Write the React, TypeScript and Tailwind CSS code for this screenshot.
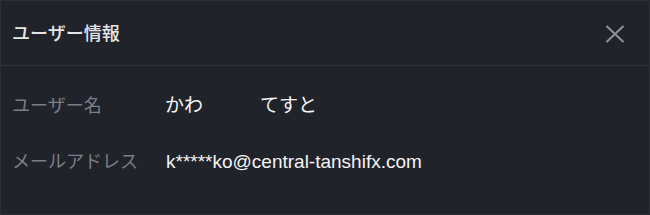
export default function App() {
  return (
    <div
      className="w-[650px] h-[215px] bg-[#20232a] border border-[#2c2f37] flex flex-col"
      style={{ fontFamily: '"Liberation Sans", "Noto Sans CJK JP", sans-serif' }}
    >
      {/* Header */}
      <div className="h-[65px] flex items-center justify-between pl-[11px] pr-[24px] border-b border-[#30333b]">
        <h2 className="text-[18px] font-medium text-[#e4e5e7] pt-[2px]">ユーザー情報</h2>
        <button className="text-[#8f9298] pt-[1px]">
          <svg width="20" height="18" viewBox="0 0 20 18" fill="none" stroke="currentColor" strokeWidth="2">
            <path d="M1.5 1L18.5 17M18.5 1L1.5 17" />
          </svg>
        </button>
      </div>

      {/* Content */}
      <div className="flex flex-col pt-[25px] pl-[11px]">
        <div className="flex items-center h-[30px]">
          <span className="w-[153px] text-[18px] text-[#7c7f87]">ユーザー名</span>
          <span className="text-[19px] text-[#f4f4f5] whitespace-pre">かわ　　　てすと</span>
        </div>
        <div className="flex items-center h-[30px] mt-[26px]">
          <span className="w-[153px] text-[18px] text-[#7c7f87]">メールアドレス</span>
          <span className="text-[19px] text-[#f4f4f5] ml-px">k*****ko@central-tanshifx.com</span>
        </div>
      </div>
    </div>
  );
}
